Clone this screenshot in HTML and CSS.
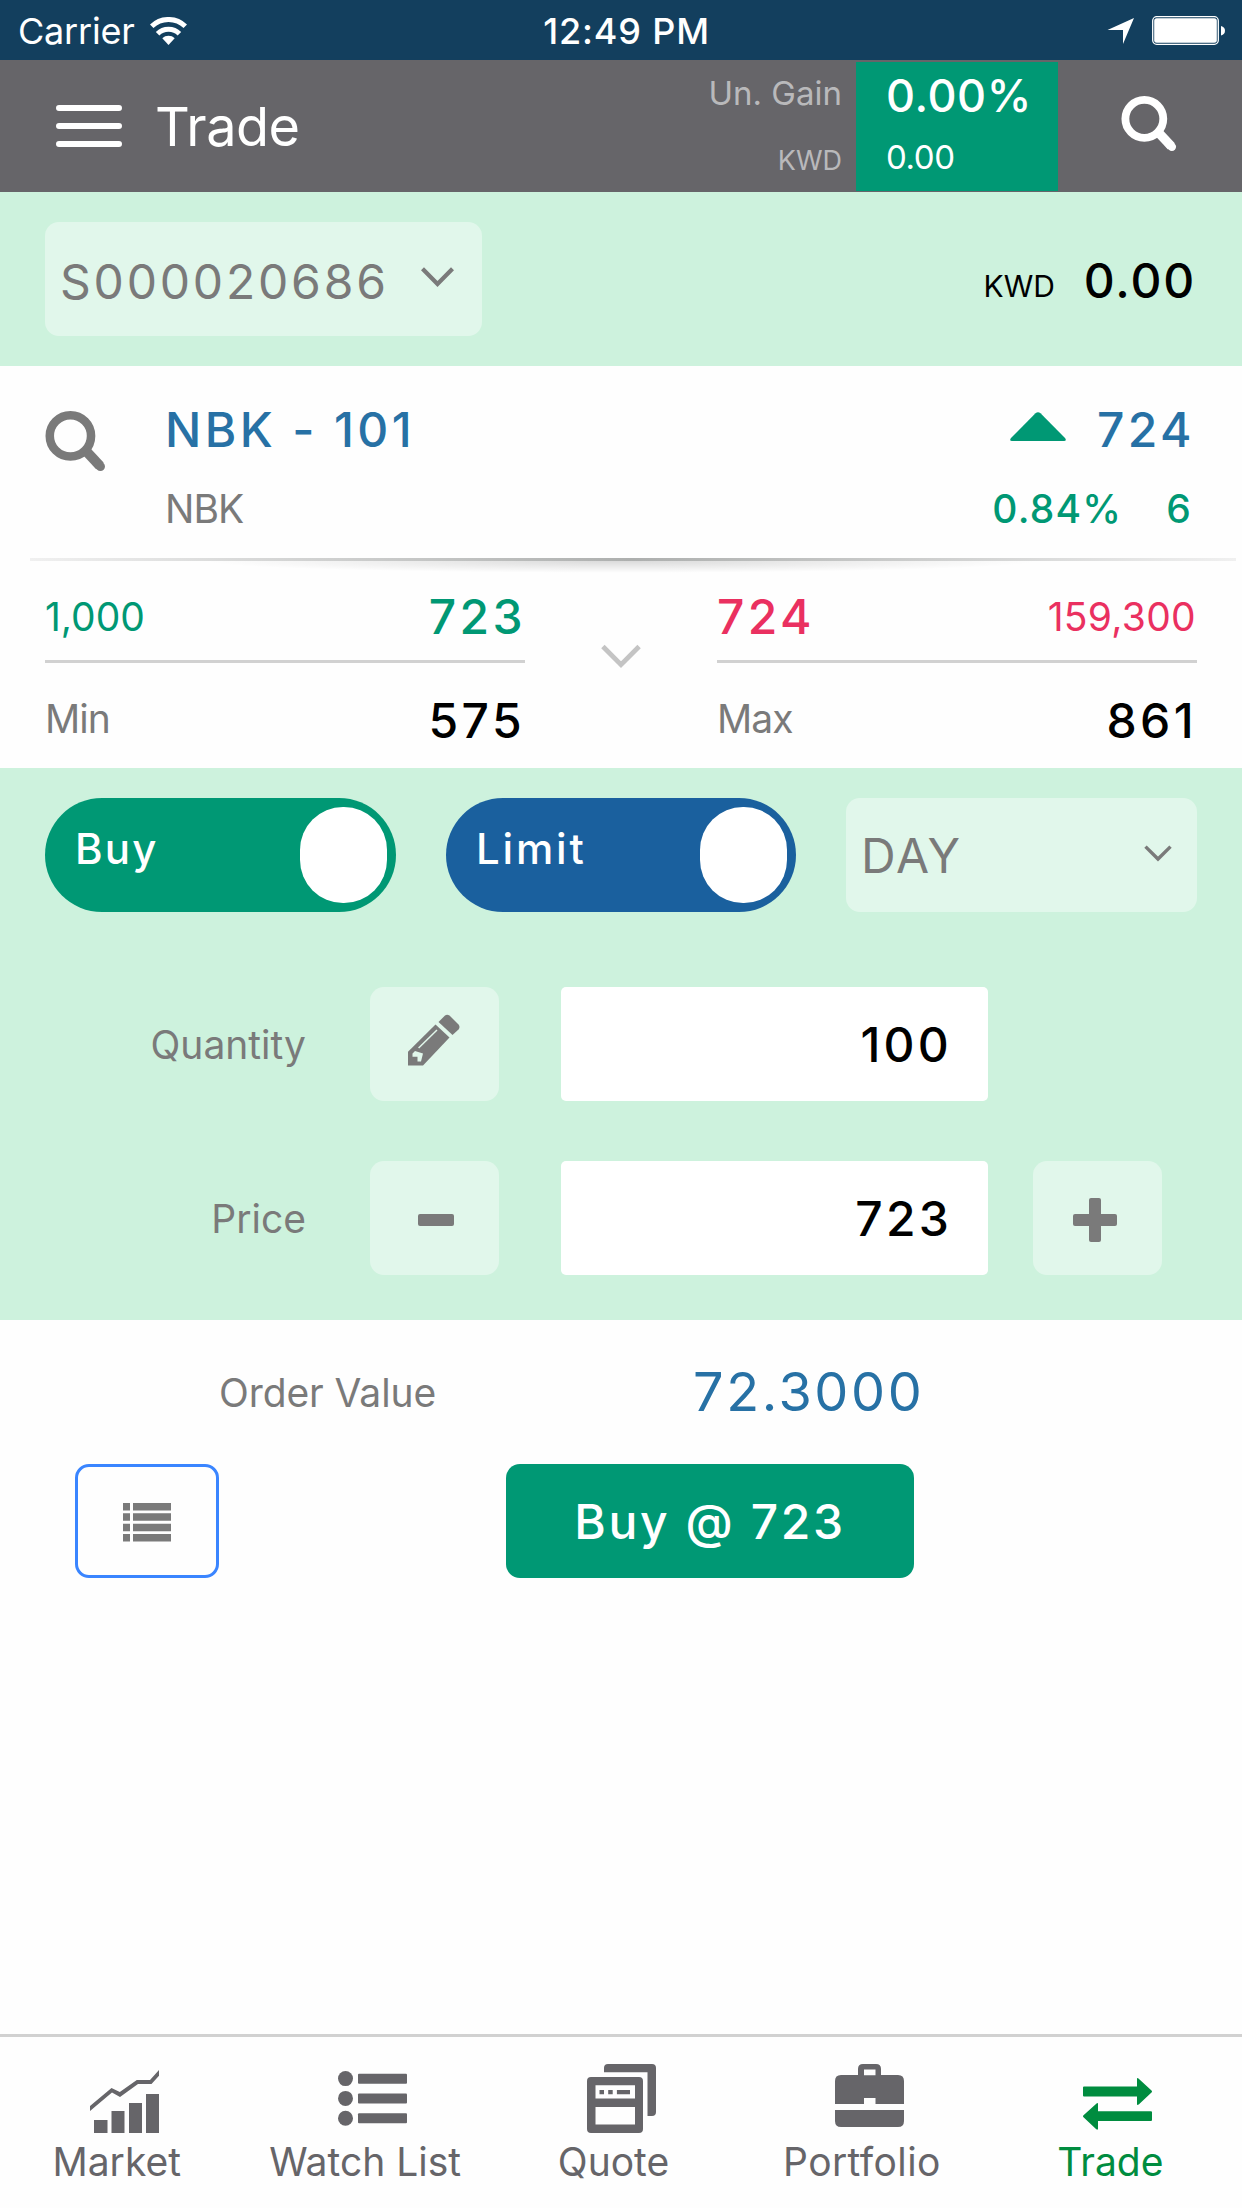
FILE: index.html
```
<!DOCTYPE html>
<html lang="en">

<head>
    <meta charset="UTF-8">
    <meta name="viewport" content="width=device-width, initial-scale=1.0">
    <title>Trade</title>
    <link rel="stylesheet" href="styles.css">
</head>
<body>
    <div class="status-bar">
        <div class="carrier">
            <span>Carrier</span>
            <svg width="37" height="28" viewBox="0 0 37 28" fill="none" stroke="#fff" stroke-width="5">
                <path d="M1.7 9.3C11 0.2 26 0.2 35.3 9.3"/>
                <path d="M7.6 16.8C13.5 10.8 23.5 10.8 29.4 16.8"/>
                <path d="M18.5 28L12.3 21.2C15.5 17.9 21.5 17.9 24.7 21.2Z" fill="#fff" stroke="none"/>
            </svg>
        </div>
        <span class="time">12:49 PM</span>
        <div class="indicators">
            <svg width="28" height="28" viewBox="0 0 28 28" fill="#fff"><path d="M27 1L16 27V13H0.5Z"/></svg>
            <svg class="battery" width="74" height="30" viewBox="0 0 74 30">
                <rect x="0.7" y="0.7" width="65.6" height="27.6" rx="4" fill="none" stroke="#fff" stroke-width="1.3"/>
                <rect x="2.2" y="2.2" width="62.6" height="24.6" rx="2.5" fill="#fff"/>
                <path d="M69 10Q73 11 73 14.8T69 19.5Z" fill="#fff"/>
            </svg>
        </div>
    </div>

    <header>
        <button class="menu-button" aria-label="Menu">
            <svg width="66" height="42" viewBox="0 0 66 42" stroke="#fff" stroke-width="6" stroke-linecap="round">
                <path d="M3 3H63M3 21H63M3 39H63"/>
            </svg>
        </button>
        <h1>Trade</h1>
        <div class="gain-labels">
            <span class="gain-title">Un. Gain</span>
            <span class="gain-currency">KWD</span>
        </div>
        <div class="gain-box">
            <span class="gain-percent">0.00%</span>
            <span class="gain-amount">0.00</span>
        </div>
        <button class="search-button" aria-label="Search">
            <svg width="56" height="56" viewBox="0 0 60 60" fill="none" stroke="#fff">
                <circle cx="25" cy="24.5" r="20.3" stroke-width="8.4"/>
                <path d="M40 39L54 54" stroke-width="10"/>
                <path d="M52 52L54.500 54.500" stroke-width="9" stroke-linecap="round"/>
            </svg>
        </button>
    </header>

    <section class="account">
        <div class="select account-select">
            <span>S000020686</span>
            <svg width="33" height="20" viewBox="0 0 33 20" fill="none" stroke="#7a7a7a" stroke-width="4.2"><path d="M1.5 1.8L16.5 17L31.5 1.8"/></svg>
        </div>
        <span class="account-currency">KWD</span>
        <span class="account-balance">0.00</span>
    </section>

    <section class="quote">
        <svg class="quote-search" width="61" height="61" viewBox="0 0 60 60" fill="none" stroke="#7a7a7a">
            <circle cx="25" cy="24.5" r="20.3" stroke-width="8.4"/>
            <path d="M40 39L54 54" stroke-width="10"/>
            <path d="M52 52L54.500 54.500" stroke-width="9" stroke-linecap="round"/>
        </svg>
        <div class="quote-name">
            <span class="symbol">NBK - 101</span>
            <span class="company">NBK</span>
        </div>
        <div class="quote-values">
            <div class="last">
                <svg width="56" height="29" viewBox="0 0 56 29" fill="#009874"><path d="M25.5 1.2Q28 -0.9 30.5 1.2L55 26Q57 29 54 29H2Q-1 29 1 26Z"/></svg>
                <span>724</span>
            </div>
            <div class="change">
                <span>0.84%</span>
                <span>6</span>
            </div>
        </div>
    </section>

    <section class="depth">
        <div class="side">
            <div class="level bid"><span>1,000</span><b>723</b></div>
            <div class="limit"><span>Min</span><b>575</b></div>
        </div>
        <svg class="depth-arrow" width="40" height="25" viewBox="0 0 42 25" fill="none" stroke="#c4c4c4" stroke-width="5"><path d="M2 2L21 21L40 2"/></svg>
        <div class="side">
            <div class="level ask"><b>724</b><span>159,300</span></div>
            <div class="limit"><span>Max</span><b>861</b></div>
        </div>
    </section>

    <section class="order-form">
        <div class="options">
            <div class="toggle toggle-buy"><span>Buy</span><i class="knob"></i></div>
            <div class="toggle toggle-limit"><span>Limit</span><i class="knob"></i></div>
            <div class="select day-select">
                <span>DAY</span>
                <svg width="28" height="17" viewBox="0 0 28 17" fill="none" stroke="#7a7a7a" stroke-width="3.4"><path d="M1.5 1.6L14 14L26.5 1.6"/></svg>
            </div>
        </div>

        <div class="field">
            <label for="quantity">Quantity</label>
            <button class="step" aria-label="Edit">
                <svg class="pencil" width="52" height="52" viewBox="0 0 52 52" fill="#7a7a7a">
                    <path d="M30.5 8L37 1.5Q39 0 41.5 1.5L50.5 10.5Q52.5 13 50.5 15.5L44.5 21Z"/>
                    <path d="M27.5 10.5L41.5 23.5L15 51.5H0V37.7Z"/>
                    <path d="M7 37L15 39.5L13 47.500H9.500V42.800H4.500V39.500Z" fill="#e1f7eb"/>
                    <path d="M10.6 34L29 16" stroke="#e1f7eb" stroke-width="1.5"/>
                </svg>
            </button>
            <input type="text" id="quantity" value="100">
        </div>

        <div class="field">
            <label for="price">Price</label>
            <button class="step" aria-label="Decrease">
                <svg class="minus" width="36" height="12" viewBox="0 0 36 12" fill="#7a7a7a"><rect width="36" height="12" rx="2"/></svg>
            </button>
            <input type="text" id="price" value="723">
            <button class="step" aria-label="Increase">
                <svg class="plus" width="44" height="44" viewBox="0 0 44 44" fill="#7a7a7a"><rect y="16" width="44" height="12" rx="2"/><rect x="16" width="12" height="44" rx="2"/></svg>
            </button>
        </div>
    </section>

    <main>
        <div class="order-value">
            <span class="order-label">Order Value</span>
            <span class="order-total">72.3000</span>
        </div>
        <div class="actions">
            <button class="list-button" aria-label="Orders">
                <svg width="48" height="39" viewBox="0 0 48 39" fill="#7a7a7a">
                    <path d="M0 0H7V7.5H0ZM10 0H48V7.5H10ZM0 10.3H7V17.8H0ZM10 10.3H48V17.8H10ZM0 20.8H7V28.3H0ZM10 20.8H48V28.3H10ZM0 31H7V38.5H0ZM10 31H48V38.5H10Z"/>
                </svg>
            </button>
            <button class="buy-button">Buy @ 723</button>
        </div>
    </main>

    <nav>
        <a class="tab">
            <svg width="69" height="69" viewBox="0 0 69 69">
                <path d="M0 42L21.5 24L29.8 28L46.8 16H60L69 6V11.7L61.5 20H48L30 33L22 28.5L0 47ZM4 56H17.5V69H4ZM21.5 47H34.5V69H21.5ZM39 39H52V69H39ZM56 30H69V69H56Z"/>
            </svg>
            <span>Market</span>
        </a>
        <a class="tab">
            <svg width="69" height="69" viewBox="0 0 69 69">
                <circle cx="7.5" cy="14.6" r="7.5"/><circle cx="7.5" cy="34.4" r="7.5"/><circle cx="7.5" cy="54.2" r="7.5"/>
                <rect x="20" y="9.7" width="49" height="10" rx="1"/><rect x="20" y="29.5" width="49" height="10" rx="1"/><rect x="20" y="49.2" width="49" height="10" rx="1"/>
            </svg>
            <span>Watch List</span>
        </a>
        <a class="tab">
            <svg width="69" height="69" viewBox="0 0 69 69" fill-rule="evenodd">
                <path d="M4 13H52Q56 13 56 17V65Q56 69 52 69H4Q0 69 0 65V17Q0 13 4 13ZM8.5 21.3V34.6H48V21.3ZM8.5 43V60.6H48V43Z"/>
                <path d="M17 8.3V4Q17 0 21 0H65Q69 0 69 4V48Q69 52 65 52H60.5V8.3Z"/>
                <path d="M12.5 26H17V30.3H12.5ZM21.2 26H25.7V30.3H21.2ZM29.9 26H43V30.3H29.9Z"/>
            </svg>
            <span>Quote</span>
        </a>
        <a class="tab portfolio">
            <svg width="69" height="69" viewBox="0 0 69 69" fill-rule="evenodd">
                <path d="M23 11V5Q23 0 28 0H41Q46 0 46 5V11H63Q69 11 69 17V40H40.5V34H29V40H0V17Q0 11 6 11ZM29 5.5V11.3H40.5V5.5Z"/>
                <path d="M0 46H69V57Q69 63 63 63H6Q0 63 0 57Z"/>
            </svg>
            <span>Portfolio</span>
        </a>
        <a class="tab active">
            <svg width="69" height="69" viewBox="0 0 69 69">
                <path d="M1 22.5H54V15Q54 13 56 15L68.5 26.5Q69.5 27.5 68.5 28.5L56 40.3Q54 42 54 40V32.5H1Q0 32.5 0 31.5V23.5Q0 22.5 1 22.5Z"/>
                <path d="M68 47.3H15V40Q15 38 13 40L0.5 51.3Q-0.5 52.3 0.5 53.3L13 65Q15 66.5 15 64.5V57H68Q69 57 69 56V48.3Q69 47.3 68 47.3Z"/>
            </svg>
            <span>Trade</span>
        </a>
    </nav>
</body>
</html>
```
FILE: styles.css
```
* {
    box-sizing: border-box;
}

body {
    font-family: Inter, "Liberation Sans", sans-serif;
    margin: 0;
    width: 1242px;
    height: 2208px;
    display: flex;
    flex-direction: column;
    background-color: #fefefe;
    color: #000;
}

svg {
    display: block;
    flex: none;
}

button {
    display: flex;
    align-items: center;
    justify-content: center;
    border: none;
    padding: 0;
    background: none;
    font-family: inherit;
    cursor: pointer;
}

/* status bar */
.status-bar {
    height: 60px;
    display: grid;
    grid-template-columns: 1fr auto 1fr;
    align-items: center;
    padding: 2px 16px 0 18px;
    background-color: #133f5e;
    color: #fff;
    font-size: 36px;
    line-height: 58px;
}

.carrier {
    display: flex;
    align-items: center;
    gap: 15px;
    letter-spacing: -0.2px;
}

.time {
    font-weight: 500;
    letter-spacing: 0.85px;
    margin-left: 9px;
}

.indicators {
    display: flex;
    align-items: center;
    justify-content: flex-end;
    gap: 17px;
}

/* header */
header {
    height: 132px;
    display: flex;
    align-items: flex-start;
    background-color: #666569;
    color: #fff;
}

.menu-button {
    width: 155px;
    height: 132px;
    justify-content: flex-start;
    padding-left: 56px;
}

h1 {
    margin: 0;
    flex: 1;
    font-size: 54px;
    font-weight: 400;
    line-height: 134px;
    letter-spacing: -0.5px;
}

.gain-labels {
    display: flex;
    flex-direction: column;
    align-items: flex-end;
    padding-right: 14px;
    color: #b9b9bb;
}

.gain-title {
    font-size: 33px;
    line-height: 66px;
}

.gain-currency {
    font-size: 27px;
    line-height: 70px;
}

.gain-box {
    display: flex;
    flex-direction: column;
    width: 202px;
    height: 129px;
    margin-top: 2px;
    padding-left: 30px;
    background-color: #009874;
}

.gain-percent {
    font-size: 45px;
    font-weight: 450;
    line-height: 67px;
    letter-spacing: 0.6px;
}

.gain-amount {
    font-size: 33px;
    line-height: 57px;
    letter-spacing: -0.4px;
}

.search-button {
    width: 184px;
    height: 128px;
    padding-right: 3px;
}

/* account */
.account {
    height: 174px;
    display: flex;
    align-items: center;
    padding: 0 46px 0 45px;
    background-color: #cdf2dd;
}

.select {
    height: 114px;
    display: flex;
    align-items: center;
    justify-content: space-between;
    border-radius: 14px;
    background-color: #e1f7eb;
    color: #7a7a7a;
    font-size: 48px;
}

.account-select {
    width: 437px;
    padding: 0 28px 0 15px;
    font-weight: 430;
    letter-spacing: 2.8px;
    margin-right: auto;
}

.account-select span {
    padding-top: 5px;
}

.account-select svg {
    margin: 0 0 5px;
}

.account-currency {
    font-size: 30px;
    margin: 14px 29px 0 0;
}

.account-balance {
    font-size: 48px;
    font-weight: 450;
    letter-spacing: 1.8px;
    padding-top: 2px;
}

/* quote */
.quote {
    position: relative;
    height: 195px;
    display: flex;
    padding: 24px 46px 0 45px;
}

/* bottom edge with its soft shadow */
.quote::before {
    content: "";
    position: absolute;
    left: 30px;
    right: 6px;
    bottom: 0;
    height: 3px;
    background: linear-gradient(to right, #f0f0f0, #adafae 50%, #f0f0f0);
}

.quote::after {
    content: "";
    position: absolute;
    left: 200px;
    right: 200px;
    bottom: -12px;
    height: 12px;
    background: radial-gradient(ellipse at top, rgba(0, 0, 0, 0.14), transparent 70%);
}

.quote-search {
    margin: 21px 59px 0 0;
}

.quote-name {
    display: flex;
    flex-direction: column;
    flex: 1;
}

.symbol,
.last {
    color: #2771a5;
    font-size: 48px;
    font-weight: 450;
    line-height: 80px;
    letter-spacing: 3.4px;
}

.company {
    color: #7a7a7a;
    font-size: 39px;
    line-height: 77px;
    letter-spacing: -0.9px;
}

.quote-values {
    display: flex;
    flex-direction: column;
    align-items: flex-end;
}

.last {
    display: flex;
    align-items: center;
    gap: 31px;
    padding-right: 1px;
}

.last svg {
    margin-bottom: 7px;
}

.change {
    display: flex;
    gap: 44px;
    color: #009874;
    font-size: 39px;
    font-weight: 450;
    line-height: 77px;
    letter-spacing: 1.2px;
    padding-right: 4px;
}

/* bid / ask */
.depth {
    height: 207px;
    display: flex;
    justify-content: space-between;
    padding: 0 45px;
}

.side {
    width: 480px;
}

.level,
.limit {
    display: flex;
    justify-content: space-between;
    font-size: 39px;
}

.level {
    height: 102px;
    line-height: 111px;
    border-bottom: 3px solid #d1d1d1;
}

.level b,
.limit b {
    font-size: 48px;
    font-weight: 450;
    letter-spacing: 3.4px;
}

.bid {
    color: #009874;
}

.bid b {
    margin-right: -1px;
}

.ask {
    color: #ea3060;
}

.ask span {
    letter-spacing: 0.3px;
    margin-right: 1px;
}

.limit {
    line-height: 111px;
}

.limit span {
    color: #7a7a7a;
    letter-spacing: -1px;
}

.limit b {
    color: #000;
    line-height: 116px;
}

.depth-arrow {
    margin-top: 83px;
}

/* order form */
.order-form {
    height: 552px;
    padding: 30px 45px 0;
    background-color: #cdf2dd;
}

.options {
    display: flex;
    justify-content: space-between;
    margin-bottom: 75px;
}

.toggle {
    width: 351px;
    height: 114px;
    display: flex;
    align-items: center;
    justify-content: space-between;
    padding: 0 9px 0 30px;
    border-radius: 57px;
    color: #fff;
    font-size: 42px;
    font-weight: 450;
}

.toggle span {
    padding-bottom: 13px;
}

.toggle-buy {
    background-color: #009874;
    letter-spacing: 2.2px;
}

.toggle-limit {
    width: 350px;
    background-color: #1a609e;
    letter-spacing: 2.8px;
}

.knob {
    width: 87px;
    height: 96px;
    border-radius: 43px;
    background-color: #fff;
}

.day-select {
    width: 351px;
    padding: 0 25px 0 15px;
    font-weight: 430;
    letter-spacing: 2px;
}

.day-select svg {
    margin-bottom: 3px;
}

.field {
    display: flex;
    align-items: center;
    margin-bottom: 60px;
}

.field label {
    width: 261px;
    margin-right: 64px;
    padding-top: 1px;
    text-align: right;
    color: #7a7a7a;
    font-size: 39px;
}

.step {
    width: 129px;
    height: 114px;
    border-radius: 14px;
    background-color: #e1f7eb;
}

.pencil {
    margin: 0 2px 8px 0;
}

.minus {
    margin: 4px 0 0 3px;
}

.plus {
    margin: 4px 5px 0 0;
}

.field input {
    width: 427px;
    height: 114px;
    margin: 0 45px 0 62px;
    padding: 1px 36px 0 0;
    border: none;
    border-radius: 5px;
    background-color: #fff;
    font-family: inherit;
    font-size: 48px;
    font-weight: 450;
    letter-spacing: 3.2px;
    text-align: right;
}

/* order total and actions */
main {
    flex: 1;
    padding: 0 75px;
}

.order-value {
    display: flex;
    height: 144px;
    line-height: 144px;
}

.order-label {
    width: 618px;
    padding: 1px 0 0 144px;
    color: #7a7a7a;
    font-size: 39px;
    letter-spacing: -0.1px;
}

.order-total {
    color: #2771a5;
    font-size: 54px;
    font-weight: 430;
    letter-spacing: 2.6px;
    line-height: 143px;
}

.actions {
    display: flex;
}

.list-button {
    width: 144px;
    height: 114px;
    border: 3px solid #3a85ff;
    border-radius: 14px;
    margin-right: 287px;
    padding-top: 2px;
}

.buy-button {
    width: 408px;
    height: 114px;
    border-radius: 14px;
    background-color: #009874;
    color: #fff;
    font-size: 48px;
    font-weight: 450;
    letter-spacing: 2.6px;
}

/* bottom tabs */
nav {
    height: 174px;
    display: flex;
    border-top: 3px solid #d1d1d1;
}

.tab {
    flex: 1;
    display: flex;
    flex-direction: column;
    align-items: center;
    padding-top: 27px;
    color: #666569;
    fill: #666569;
    font-size: 39px;
}

.tab span {
    line-height: 58px;
    margin-right: 15px;
}

.portfolio span {
    letter-spacing: 0.4px;
}

.active {
    color: #008c3f;
    fill: #008c3f;
}
```
